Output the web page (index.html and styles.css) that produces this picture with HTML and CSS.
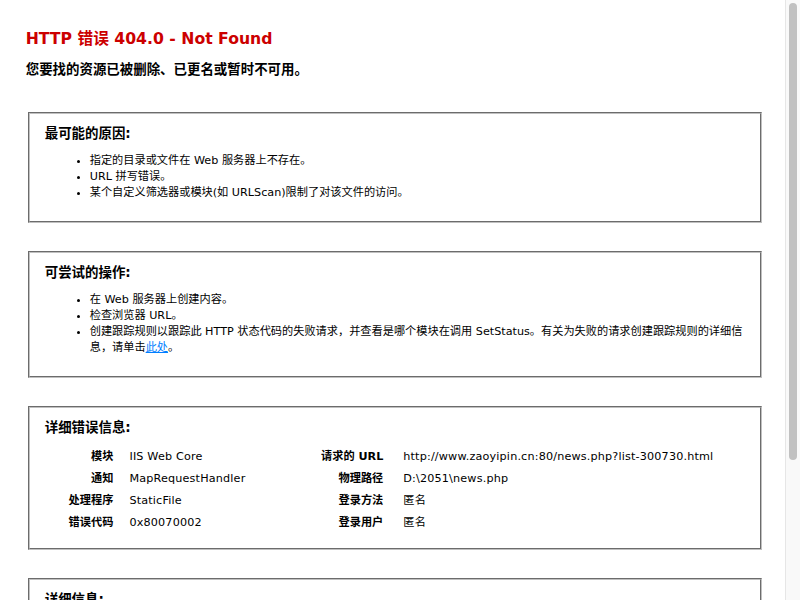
FILE: index.html
```html
<!DOCTYPE html>
<html lang="zh-CN">
<head>
<meta charset="utf-8">
<title>IIS 8.5 详细错误 - 404.0 - Not Found</title>
<link rel="stylesheet" href="styles.css">
</head>
<body>
<div id="content">
  <div class="content-container">
    <h3>HTTP 错误 404.0 - Not Found</h3>
    <h4>您要找的资源已被删除、已更名或暂时不可用。</h4>
  </div>
  <div class="content-container">
    <fieldset><h4>最可能的原因:</h4>
      <ul>
        <li>指定的目录或文件在 Web 服务器上不存在。</li>
        <li>URL 拼写错误。</li>
        <li>某个自定义筛选器或模块(如 URLScan)限制了对该文件的访问。</li>
      </ul>
    </fieldset>
  </div>
  <div class="content-container">
    <fieldset><h4>可尝试的操作:</h4>
      <ul>
        <li>在 Web 服务器上创建内容。</li>
        <li>检查浏览器 URL。</li>
        <li>创建跟踪规则以跟踪此 HTTP 状态代码的失败请求，并查看是哪个模块在调用 SetStatus。有关为失败的请求创建跟踪规则的详细信息，请单击<a href="#">此处</a>。</li>
      </ul>
    </fieldset>
  </div>
  <div class="content-container">
    <fieldset><h4>详细错误信息:</h4>
      <div class="details-left">
        <table>
          <tr><th>模块</th><td>&nbsp;&nbsp;&nbsp;IIS Web Core</td></tr>
          <tr><th>通知</th><td>&nbsp;&nbsp;&nbsp;MapRequestHandler</td></tr>
          <tr><th>处理程序</th><td>&nbsp;&nbsp;&nbsp;StaticFile</td></tr>
          <tr><th>错误代码</th><td>&nbsp;&nbsp;&nbsp;0x80070002</td></tr>
        </table>
      </div>
      <div class="details-right">
        <table>
          <tr><th>请求的 URL</th><td>&nbsp;&nbsp;&nbsp;http://www.zaoyipin.cn:80/news.php?list-300730.html</td></tr>
          <tr><th>物理路径</th><td>&nbsp;&nbsp;&nbsp;D:\2051\news.php</td></tr>
          <tr><th>登录方法</th><td>&nbsp;&nbsp;&nbsp;匿名</td></tr>
          <tr><th>登录用户</th><td>&nbsp;&nbsp;&nbsp;匿名</td></tr>
        </table>
      </div>
      <div class="clear"></div>
    </fieldset>
  </div>
  <div class="content-container">
    <fieldset><h4>详细信息:</h4>
      此错误表明文件或目录在 Web 服务器上不存在。创建文件或目录并重新尝试请求。
      <p><a href="#">查看更多信息 &raquo;</a></p>
      <p>Microsoft 知识库文章:</p>
      <ul>
        <li>IIS 7.0 及更高版本中的 HTTP 状态代码</li>
        <li>如何使用失败请求跟踪来排查 IIS 中的问题</li>
      </ul>
    </fieldset>
  </div>
</div>
<div class="scrollbar"><div class="thumb"></div></div>
</body>
</html>
```

FILE: styles.css
```css
body {
  margin: 0 15px 0 0;
  font-size: 11.2px;
  line-height: 16px;
  font-family: Verdana, "DejaVu Sans", "Noto Sans CJK SC", sans-serif;
  color: #000;
  background: #fff;
}
ul {
  margin: 10px 0 10px 5px;
  padding-left: 40px;
}
fieldset {
  margin: 0 2px;
  padding: 0 15px 10px 15px;
  border: 2px groove #c0c0c0;
  word-break: break-all;
  min-width: 0;
}
a:link, a:visited {
  color: #007EFF;
  font-weight: normal;
}
h3 {
  font-size: 15.68px;
  line-height: 22px;
  margin: 10px 0 0 0;
  color: #CC0000;
}
h4 {
  font-size: 13.44px;
  line-height: 19px;
  margin: 10px 0 5px 0;
}
#content {
  margin: 0 0 0 2%;
  position: relative;
}
.content-container {
  background: #FFF;
  width: 96%;
  margin-top: 8px;
  padding: 10px;
  position: relative;
}
.content-container p {
  margin: 0 0 10px 0;
}
.details-left {
  width: 35%;
  float: left;
  margin-right: 2%;
}
.details-right {
  width: 63%;
  float: left;
  overflow: hidden;
}
table {
  margin: 4px 0 4px 0;
  width: 100%;
  border: none;
  border-collapse: separate;
  border-spacing: 0;
}
td, th {
  vertical-align: top;
  padding: 3px 0;
  text-align: left;
  font-weight: normal;
  border: none;
}
td {
  letter-spacing: 0.17px;
}
th {
  width: 30%;
  text-align: right;
  padding-right: 2%;
  font-weight: bold;
}
.details-right th {
  width: 20%;
}
.clear {
  clear: both;
}
.scrollbar {
  position: fixed;
  top: 0;
  right: 0;
  width: 15px;
  height: 100vh;
  box-sizing: border-box;
  background: #f9f9f9;
  border-left: 1px solid #e6e6e6;
  padding: 3px 3px 0 3px;
}
.thumb {
  width: 8px;
  height: 457px;
  border-radius: 4px;
  background: #c1c1c1;
}
```
